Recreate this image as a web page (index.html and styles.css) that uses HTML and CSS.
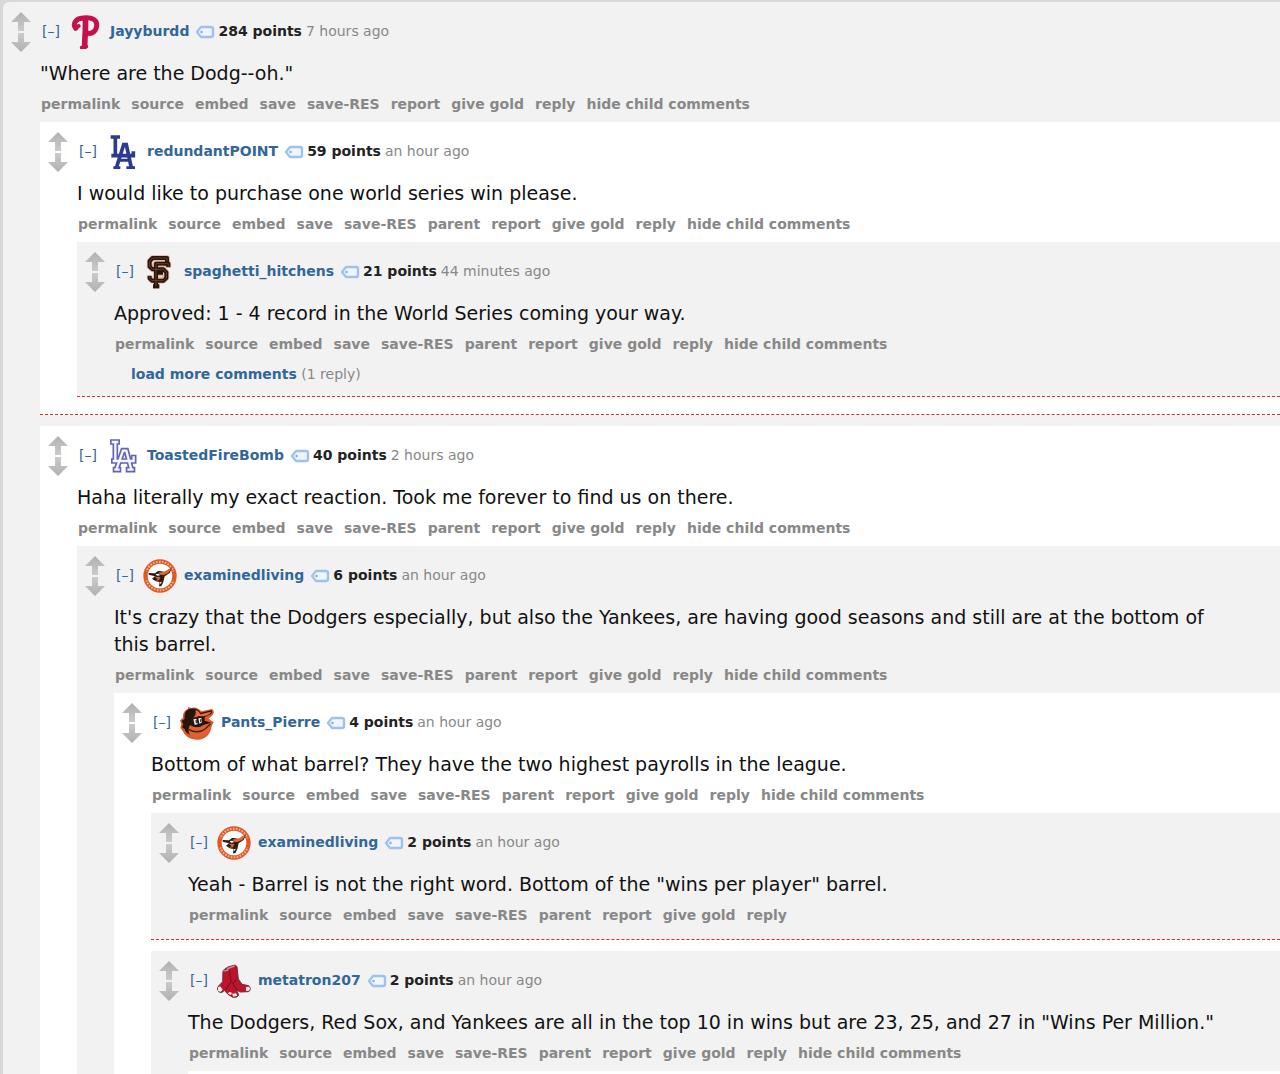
FILE: index.html
```
<!DOCTYPE html>
<html lang="en">
<head>
    <meta charset="UTF-8">
    <meta name="viewport" content="width=device-width, initial-scale=1.0">
    <title>Comments</title>
    <link rel="stylesheet" href="styles.css">
</head>
<body>
    <svg class="sprites" aria-hidden="true">
        <defs>
            <linearGradient id="shade" x1="0" y1="0" x2="0" y2="1">
                <stop offset="0" stop-color="#b0b0b0"/>
                <stop offset="1" stop-color="#cbcbcb"/>
            </linearGradient>
        </defs>
        <symbol id="arrow" viewBox="0 0 20 19">
            <path d="M10 0 L20 10 H13 V19 H7 V10 H0 Z" fill="url(#shade)"/>
        </symbol>
        <symbol id="tag" viewBox="0 0 20 14">
            <path d="M2 7 L6 2 H16 Q18 2 18 4 V10 Q18 12 16 12 H6 Z" fill="#eef5fc" stroke="#9fc3e8" stroke-width="2.4" stroke-linejoin="round"/>
            <circle cx="6.500" cy="7" r="1.200" fill="#7fa9d8"/>
        </symbol>
        <symbol id="phillies" viewBox="0 0 102 102">
            <g fill="none" stroke="#c4104c" stroke-linecap="round" stroke-linejoin="round">
                <path d="M20 40 C10 26 20 10 42 9 C68 5 85 14 83 32 C82 48 70 57 57 55" stroke-width="15"/>
                <path d="M49 12 C51 40 47 70 47 94" stroke-width="17"/>
                <path d="M20 38 L29 33" stroke-width="12"/>
                <path d="M38 98 L52 95" stroke-width="11"/>
            </g>
        </symbol>
        <symbol id="dodgers" viewBox="0 0 102 102">
            <g fill="none" stroke="#2c3b90" stroke-width="11">
                <path d="M14 6 H42 M28 6 V62 M16 62 H82 V49"/>
                <path d="M31 99 L53 29 H61 L76 99"/>
                <path d="M22 98 H43 M61 98 H87 M42 76 H70" stroke-width="9"/>
            </g>
        </symbol>
        <symbol id="dodgers-old" viewBox="0 0 102 102">
            <g fill="none" stroke="#6365b4" stroke-width="17">
                <path d="M12 9 H42 M28 9 V65 M15 66 H83 V47"/>
                <path d="M31 92 L51 35 H61 L76 92"/>
                <path d="M20 92 H46 M59 92 H88"/>
            </g>
            <g fill="none" stroke="#f5f5ff" stroke-width="7">
                <path d="M17 9 H37 M28 9 V65 M20 66 H83 V52"/>
                <path d="M31 92 L51 35 H61 L76 92"/>
                <path d="M25 92 H41 M64 92 H83"/>
            </g>
        </symbol>
        <symbol id="giants" viewBox="0 0 102 102">
            <g fill="none" stroke-linejoin="round">
                <g stroke="#e0b096" stroke-width="17">
                    <path d="M72 22 V9 H29 L20 18 V35 L29 43 H61 L70 52 V69 L61 77 H27 L20 70 V62"/>
                    <path d="M76 37 V26 H39 V93 M30 94 H49 M40 53 H60"/>
                </g>
                <g stroke="#24150f" stroke-width="12">
                    <path d="M72 22 V9 H29 L20 18 V35 L29 43 H61 L70 52 V69 L61 77 H27 L20 70 V62"/>
                    <path d="M76 37 V26 H39 V93 M30 94 H49 M40 53 H60"/>
                </g>
                <g stroke="#8a5238" stroke-width="2">
                    <path d="M72 20 V9 H29 L20 18 V35 L29 43 H61 L70 52 V69 L61 77 H27 L20 70 V64"/>
                    <path d="M76 35 V26 H39 V93"/>
                </g>
                <path d="M46 34 H64 M30 26 V34 M47 62 H60 V68 H47" stroke="#e0b096" stroke-width="4"/>
            </g>
        </symbol>
        <symbol id="orioles-badge" viewBox="0 0 102 102">
            <circle cx="51" cy="51" r="50" fill="#df5623"/>
            <circle cx="51" cy="51" r="43" fill="none" stroke="#f0b397" stroke-width="6" stroke-dasharray="5 4"/>
            <path d="M3 51 A48 48 0 0 1 6 36 L16 39 L15 62 L6 66 Z M99 51 A48 48 0 0 0 96 36 L86 39 L87 62 L96 66 Z" fill="#df5623"/>
            <circle cx="51" cy="51" r="37" fill="#fff"/>
            <path d="M17 42 L36 43 L45 36 C57 36 64 43 75 32 L87 26 L80 42 L65 52 L61 69 L55 82 L48 82 L50 69 L38 67 L27 59 L36 52 L17 47 Z" fill="#2c1c17"/>
            <path d="M48 39 C60 43 68 34 86 27 L76 42 L62 48 L50 47 Z" fill="#e56532"/>
            <path d="M35 53 L52 54 L48 64 L37 65 L44 60 Z" fill="#e56532"/>
            <path d="M38 45 L47 44 L51 49 L42 50 Z M51 70 L57 68 L52 76 Z" fill="#fff"/>
        </symbol>
        <symbol id="orioles" viewBox="0 0 102 102">
            <path d="M25 3 L33 6 C44 2 56 6 64 16 L96 9 Q105 14 99 26 L86 38 L101 49 L95 60 C92 86 74 102 52 101 C30 100 14 90 10 78 L1 66 L4 54 L0 43 L9 35 C8 22 14 12 24 9 Z" fill="#dd5a2c"/>
            <path d="M27 9 C44 4 56 10 62 20 L94 13 Q99 19 92 25 L74 33 L74 44 L94 50 L70 57 C62 66 40 66 32 58 C26 66 25 76 30 86 C20 82 15 77 14 69 L6 64 L10 55 L5 45 L14 38 C12 24 17 14 27 9 Z" fill="#24150f"/>
            <path d="M46 13 C54 13 58 19 61 25 L92 17 C94 22 84 28 70 31 C58 30 49 31 40 36 C47 29 49 21 46 13 Z" fill="#e8673c"/>
            <path d="M30 58 C42 68 60 66 70 58 L93 52 C90 78 74 96 52 96 C38 96 28 88 26 77 C25 69 27 63 30 58 Z" fill="#e0602f"/>
            <path d="M40 40 L49 38 L53 55 L44 56 Z M55 37 L64 36 L65 50 L58 53 Z" fill="#f4efec"/>
            <path d="M46 43 L50 42 L51 51 L48 52 Z M60 40 L63 40 V48 L61 49 Z" fill="#24150f"/>
            <path d="M26 70 C42 80 62 80 76 68 L92 53" fill="none" stroke="#47200f" stroke-width="4"/>
        </symbol>
        <symbol id="redsox" viewBox="0 0 102 102">
            <path d="M36 8 L54 3 L60 8 L64 45 L75 61 L95 65 Q105 75 95 83 L70 84 L58 78 L65 92 Q63 101 48 100 L34 92 L22 79 Q17 88 6 84 L1 75 L4 67 L17 53 L18 20 L29 11 Z" fill="#bc152b" stroke="#6e303d" stroke-width="3" stroke-linejoin="round"/>
            <path d="M30 14 L53 6 M19 21 L35 18" stroke="#bd8b91" stroke-width="5"/>
            <path d="M37 18 L42 53 L26 78 M43 52 L60 79 M58 47 L48 60" fill="none" stroke="#730f20" stroke-width="3"/>
            <path d="M3 70 L10 67 L17 77 L10 84 L3 80 Z M45 89 L57 88 L61 95 L49 98 Z M87 69 L96 68 L100 75 L94 81 L87 80 Z M36 84 L45 86 L42 93 L33 89 Z" fill="#f7eeee"/>
        </symbol>
    </svg>

    <main class="thread">
        <article class="comment">
            <div class="votes">
                <button aria-label="upvote"><svg><use href="#arrow"/></svg></button>
                <button class="down" aria-label="downvote"><svg><use href="#arrow"/></svg></button>
            </div>
            <div class="entry">
                <header class="tagline">
                    <a class="expand" href="#">[–]</a>
                    <svg class="flair"><use href="#phillies"/></svg>
                    <a class="author" href="#">Jayyburdd</a>
                    <a class="tag" href="#" aria-label="tag user"><svg><use href="#tag"/></svg></a>
                    <b class="score">284 points</b>
                    <time>7 hours ago</time>
                </header>
                <p class="text">"Where are the Dodg--oh."</p>
                <nav class="buttons">
                    <a href="#">permalink</a>
                    <a href="#">source</a>
                    <a href="#">embed</a>
                    <a href="#">save</a>
                    <a href="#">save-RES</a>
                    <a href="#">report</a>
                    <a href="#">give gold</a>
                    <a href="#">reply</a>
                    <a href="#">hide child comments</a>
                </nav>

                <article class="comment odd">
                    <div class="votes">
                        <button aria-label="upvote"><svg><use href="#arrow"/></svg></button>
                        <button class="down" aria-label="downvote"><svg><use href="#arrow"/></svg></button>
                    </div>
                    <div class="entry">
                        <header class="tagline">
                            <a class="expand" href="#">[–]</a>
                            <svg class="flair"><use href="#dodgers"/></svg>
                            <a class="author" href="#">redundantPOINT</a>
                            <a class="tag" href="#" aria-label="tag user"><svg><use href="#tag"/></svg></a>
                            <b class="score">59 points</b>
                            <time>an hour ago</time>
                        </header>
                        <p class="text">I would like to purchase one world series win please.</p>
                        <nav class="buttons">
                            <a href="#">permalink</a>
                            <a href="#">source</a>
                            <a href="#">embed</a>
                            <a href="#">save</a>
                            <a href="#">save-RES</a>
                            <a href="#">parent</a>
                            <a href="#">report</a>
                            <a href="#">give gold</a>
                            <a href="#">reply</a>
                            <a href="#">hide child comments</a>
                        </nav>

                        <article class="comment">
                            <div class="votes">
                                <button aria-label="upvote"><svg><use href="#arrow"/></svg></button>
                                <button class="down" aria-label="downvote"><svg><use href="#arrow"/></svg></button>
                            </div>
                            <div class="entry">
                                <header class="tagline">
                                    <a class="expand" href="#">[–]</a>
                                    <svg class="flair"><use href="#giants"/></svg>
                                    <a class="author" href="#">spaghetti_hitchens</a>
                                    <a class="tag" href="#" aria-label="tag user"><svg><use href="#tag"/></svg></a>
                                    <b class="score">21 points</b>
                                    <time>44 minutes ago</time>
                                </header>
                                <p class="text">Approved: 1 - 4 record in the World Series coming your way.</p>
                                <nav class="buttons">
                                    <a href="#">permalink</a>
                                    <a href="#">source</a>
                                    <a href="#">embed</a>
                                    <a href="#">save</a>
                                    <a href="#">save-RES</a>
                                    <a href="#">parent</a>
                                    <a href="#">report</a>
                                    <a href="#">give gold</a>
                                    <a href="#">reply</a>
                                    <a href="#">hide child comments</a>
                                </nav>
                                <div class="more"><a href="#">load more comments</a> (1 reply)</div>
                            </div>
                        </article>
                    </div>
                </article>

                <article class="comment odd">
                    <div class="votes">
                        <button aria-label="upvote"><svg><use href="#arrow"/></svg></button>
                        <button class="down" aria-label="downvote"><svg><use href="#arrow"/></svg></button>
                    </div>
                    <div class="entry">
                        <header class="tagline">
                            <a class="expand" href="#">[–]</a>
                            <svg class="flair"><use href="#dodgers-old"/></svg>
                            <a class="author" href="#">ToastedFireBomb</a>
                            <a class="tag" href="#" aria-label="tag user"><svg><use href="#tag"/></svg></a>
                            <b class="score">40 points</b>
                            <time>2 hours ago</time>
                        </header>
                        <p class="text">Haha literally my exact reaction. Took me forever to find us on there.</p>
                        <nav class="buttons">
                            <a href="#">permalink</a>
                            <a href="#">source</a>
                            <a href="#">embed</a>
                            <a href="#">save</a>
                            <a href="#">save-RES</a>
                            <a href="#">parent</a>
                            <a href="#">report</a>
                            <a href="#">give gold</a>
                            <a href="#">reply</a>
                            <a href="#">hide child comments</a>
                        </nav>

                        <article class="comment">
                            <div class="votes">
                                <button aria-label="upvote"><svg><use href="#arrow"/></svg></button>
                                <button class="down" aria-label="downvote"><svg><use href="#arrow"/></svg></button>
                            </div>
                            <div class="entry">
                                <header class="tagline">
                                    <a class="expand" href="#">[–]</a>
                                    <svg class="flair"><use href="#orioles-badge"/></svg>
                                    <a class="author" href="#">examinedliving</a>
                                    <a class="tag" href="#" aria-label="tag user"><svg><use href="#tag"/></svg></a>
                                    <b class="score">6 points</b>
                                    <time>an hour ago</time>
                                </header>
                                <p class="text">It's crazy that the Dodgers especially, but also the Yankees, are having good seasons and still are at the bottom of this barrel.</p>
                                <nav class="buttons">
                                    <a href="#">permalink</a>
                                    <a href="#">source</a>
                                    <a href="#">embed</a>
                                    <a href="#">save</a>
                                    <a href="#">save-RES</a>
                                    <a href="#">parent</a>
                                    <a href="#">report</a>
                                    <a href="#">give gold</a>
                                    <a href="#">reply</a>
                                    <a href="#">hide child comments</a>
                                </nav>

                                <article class="comment odd">
                                    <div class="votes">
                                        <button aria-label="upvote"><svg><use href="#arrow"/></svg></button>
                                        <button class="down" aria-label="downvote"><svg><use href="#arrow"/></svg></button>
                                    </div>
                                    <div class="entry">
                                        <header class="tagline">
                                            <a class="expand" href="#">[–]</a>
                                            <svg class="flair"><use href="#orioles"/></svg>
                                            <a class="author" href="#">Pants_Pierre</a>
                                            <a class="tag" href="#" aria-label="tag user"><svg><use href="#tag"/></svg></a>
                                            <b class="score">4 points</b>
                                            <time>an hour ago</time>
                                        </header>
                                        <p class="text">Bottom of what barrel? They have the two highest payrolls in the league.</p>
                                        <nav class="buttons">
                                            <a href="#">permalink</a>
                                            <a href="#">source</a>
                                            <a href="#">embed</a>
                                            <a href="#">save</a>
                                            <a href="#">save-RES</a>
                                            <a href="#">parent</a>
                                            <a href="#">report</a>
                                            <a href="#">give gold</a>
                                            <a href="#">reply</a>
                                            <a href="#">hide child comments</a>
                                        </nav>

                                        <article class="comment">
                                            <div class="votes">
                                                <button aria-label="upvote"><svg><use href="#arrow"/></svg></button>
                                                <button class="down" aria-label="downvote"><svg><use href="#arrow"/></svg></button>
                                            </div>
                                            <div class="entry">
                                                <header class="tagline">
                                                    <a class="expand" href="#">[–]</a>
                                                    <svg class="flair"><use href="#orioles-badge"/></svg>
                                                    <a class="author" href="#">examinedliving</a>
                                                    <a class="tag" href="#" aria-label="tag user"><svg><use href="#tag"/></svg></a>
                                                    <b class="score">2 points</b>
                                                    <time>an hour ago</time>
                                                </header>
                                                <p class="text">Yeah - Barrel is not the right word. Bottom of the "wins per player" barrel.</p>
                                                <nav class="buttons">
                                                    <a href="#">permalink</a>
                                                    <a href="#">source</a>
                                                    <a href="#">embed</a>
                                                    <a href="#">save</a>
                                                    <a href="#">save-RES</a>
                                                    <a href="#">parent</a>
                                                    <a href="#">report</a>
                                                    <a href="#">give gold</a>
                                                    <a href="#">reply</a>
                                                </nav>
                                            </div>
                                        </article>

                                        <article class="comment">
                                            <div class="votes">
                                                <button aria-label="upvote"><svg><use href="#arrow"/></svg></button>
                                                <button class="down" aria-label="downvote"><svg><use href="#arrow"/></svg></button>
                                            </div>
                                            <div class="entry">
                                                <header class="tagline">
                                                    <a class="expand" href="#">[–]</a>
                                                    <svg class="flair"><use href="#redsox"/></svg>
                                                    <a class="author" href="#">metatron207</a>
                                                    <a class="tag" href="#" aria-label="tag user"><svg><use href="#tag"/></svg></a>
                                                    <b class="score">2 points</b>
                                                    <time>an hour ago</time>
                                                </header>
                                                <p class="text">The Dodgers, Red Sox, and Yankees are all in the top 10 in wins but are 23, 25, and 27 in "Wins Per Million."</p>
                                                <nav class="buttons">
                                                    <a href="#">permalink</a>
                                                    <a href="#">source</a>
                                                    <a href="#">embed</a>
                                                    <a href="#">save</a>
                                                    <a href="#">save-RES</a>
                                                    <a href="#">parent</a>
                                                    <a href="#">report</a>
                                                    <a href="#">give gold</a>
                                                    <a href="#">reply</a>
                                                    <a href="#">hide child comments</a>
                                                </nav>
                                                <article class="comment odd"></article>
                                            </div>
                                        </article>
                                    </div>
                                </article>
                            </div>
                        </article>
                    </div>
                </article>
            </div>
        </article>
    </main>
</body>
</html>
```
FILE: styles.css
```
* {
    box-sizing: border-box;
}
html {
    scrollbar-width: none;
}
body {
    margin: 0;
    background-color: #d8d8d8;
    color: #888;
    font-family: Verdana, "DejaVu Sans", sans-serif;
    font-size: 14px;
    line-height: 18px;
}
a {
    color: #336699;
    text-decoration: none;
}
a:hover {
    text-decoration: underline;
}
.sprites {
    position: absolute;
    width: 0;
    height: 0;
}
.thread {
    padding: 2px 0 0 3px;
}
.comment {
    display: flex;
    margin-bottom: 11px;
    padding-bottom: 6px;
    background-color: #f2f2f2;
}
.comment.odd {
    background-color: #fff;
}
.comment .comment {
    border-bottom: 1px dashed #cc3333;
}
.thread > .comment {
    margin-bottom: 0;
    border-top-left-radius: 6px;
}
.votes {
    display: flex;
    flex: none;
    flex-direction: column;
    align-items: center;
    gap: 2px;
    width: 37px;
    padding: 10px 2px 0 0;
}
.votes button {
    padding: 0;
    border: none;
    background: none;
    cursor: pointer;
}
.votes svg {
    display: block;
    width: 20px;
    height: 19px;
}
.votes .down {
    transform: rotate(180deg);
}
.entry {
    flex: 1;
    min-width: 0;
}
.tagline {
    display: flex;
    align-items: center;
    height: 36px;
    margin-top: 11px;
    padding-left: 2px;
    white-space: nowrap;
}
.expand {
    width: 20px;
}
.flair {
    align-self: flex-end;
    width: 34px;
    height: 34px;
    margin: 0 7px;
}
.author {
    font-weight: bold;
}
.tag {
    margin: 2px 3px 0 6px;
}
.tag svg {
    display: block;
    width: 20px;
    height: 14px;
}
.score {
    margin-right: 4px;
    color: #222;
}
.text {
    margin: 11px 0 8px;
    padding-right: 40px;
    color: #111;
    font-size: 19px;
    line-height: 27px;
}
.buttons {
    display: flex;
    gap: 11px;
    margin-bottom: 9px;
    padding-left: 1px;
    white-space: nowrap;
}
.buttons a {
    color: #888;
    font-weight: bold;
}
.more {
    padding: 3px 0 7px 17px;
}
.more a {
    font-weight: bold;
}
```
